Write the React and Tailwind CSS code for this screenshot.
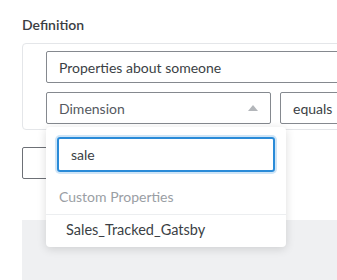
import React from "react";

function Triangle() {
    return (
        <svg width="10" height="6" viewBox="0 0 10 6" className="fill-[#b3b6ba]">
            <path d="M0 6 L5 0 L10 6 Z" />
        </svg>
    );
}

export default function App() {
    return (
        <div className="relative w-[337px] h-[280px] overflow-hidden bg-white text-[#3b3f45] font-['Lato',sans-serif]">
            <div className="pl-[22px] pt-[15px]">
                <h2 className="text-[14px] font-semibold text-[#3a3d42] leading-[20px]">Definition</h2>

                <div className="mt-[8px] w-[400px] h-[87px] rounded-[4px] border border-[#e4e6e9] pl-[23px] pt-[7px] space-y-[9px]">
                    <div className="h-[32px] border border-[#85898f] rounded-[2px] flex items-center pl-[12px] text-[14px]">
                        Properties about someone
                    </div>
                    <div className="flex gap-[9px]">
                        <div className="w-[225px] h-[32px] border border-[#85898f] rounded-[2px] flex items-center justify-between pl-[12px] pr-[12px] text-[14px] text-[#55595f]">
                            <span>Dimension</span>
                            <Triangle />
                        </div>
                        <div className="flex-1 h-[32px] border border-[#85898f] rounded-[2px] flex items-center pl-[12px] text-[14px]">
                            equals
                        </div>
                    </div>
                </div>

                <button className="mt-[17px] block w-[80px] h-[32px] border border-[#6d7076] rounded-[2px] bg-white"></button>

                <div className="mt-[41px] w-[400px] h-[80px] bg-[#eff0f2]"></div>
            </div>

            <div className="absolute left-[46px] top-[127px] w-[240px] rounded-[4px] bg-white shadow-[0_2px_10px_rgba(0,0,0,0.14)]">
                <div className="px-[11px] pt-[10px]">
                    <div className="h-[35px] rounded-[3px] border-2 border-[#2a8bd8] ring-2 ring-[#cfe5f7] flex items-center pl-[12px] text-[14px] text-[#3b3f45]">
                        sale
                    </div>
                </div>
                <div className="pl-[13px] pt-[15px] pb-[7px] text-[14px] text-[#9a9ea4] leading-[20px]">
                    Custom Properties
                </div>
                <div className="border-t border-[#eceef0] pl-[20px] h-[33px] pb-[3px] flex items-center text-[14.5px] text-[#3b3f45]">
                    Sales_Tracked_Gatsby
                </div>
            </div>
        </div>
    );
}
